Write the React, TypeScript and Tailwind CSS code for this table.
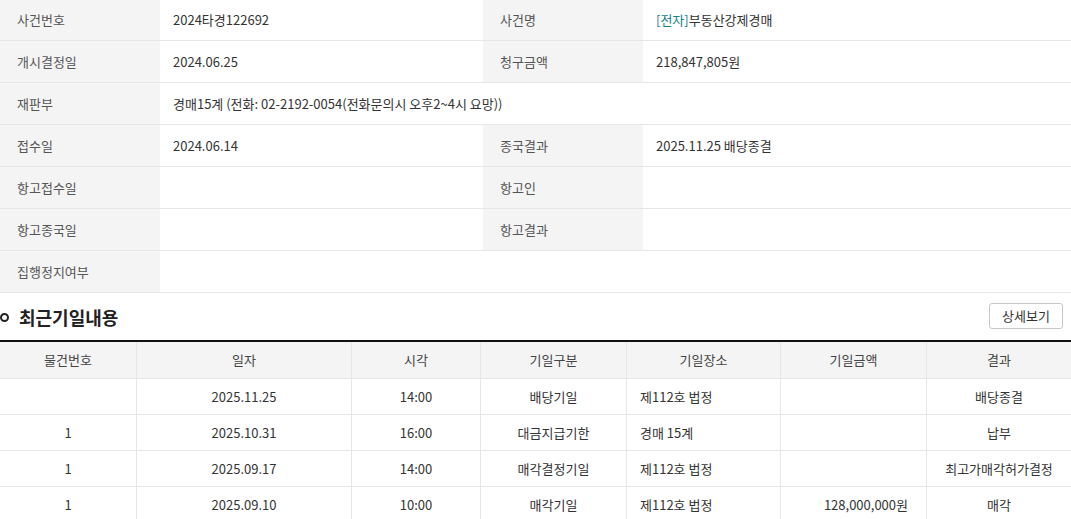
import React from "react";

const font = { fontFamily: '"Noto Sans CJK KR", "Noto Sans", sans-serif' };

type Row = { l1: string; v1: React.ReactNode; l2?: string; v2?: React.ReactNode; span?: boolean };

const rows: Row[] = [
  { l1: "사건번호", v1: "2024타경122692", l2: "사건명", v2: (<><span className="text-[#17808f]">[전자]</span>부동산강제경매</>) },
  { l1: "개시결정일", v1: "2024.06.25", l2: "청구금액", v2: "218,847,805원" },
  { l1: "재판부", v1: "경매15계 (전화: 02-2192-0054(전화문의시 오후2~4시 요망))", span: true },
  { l1: "접수일", v1: "2024.06.14", l2: "종국결과", v2: "2025.11.25 배당종결" },
  { l1: "항고접수일", v1: "", l2: "항고인", v2: "" },
  { l1: "항고종국일", v1: "", l2: "항고결과", v2: "" },
  { l1: "집행정지여부", v1: "", span: true },
];

const hist = [
  ["", "2025.11.25", "14:00", "배당기일", "제112호 법정", "", "배당종결"],
  ["1", "2025.10.31", "16:00", "대금지급기한", "경매 15계", "", "납부"],
  ["1", "2025.09.17", "14:00", "매각결정기일", "제112호 법정", "", "최고가매각허가결정"],
  ["1", "2025.09.10", "10:00", "매각기일", "제112호 법정", "128,000,000원", "매각"],
];

const widths = [137, 215, 129, 146, 154, 146, 144];
const heads = ["물건번호", "일자", "시각", "기일구분", "기일장소", "기일금액", "결과"];

export default function App() {
  return (
    <div className="w-[1071px] h-[519px] overflow-hidden bg-white text-[13px] text-[#333]" style={font}>
      <div className="flex flex-col">
        {rows.map((r, i) => (
          <div key={i} className={`flex border-b border-[#e6e6e6] ${i === 0 ? "h-[41px]" : "h-[42px]"}`}>
            <div className="w-[160px] bg-[#f4f4f4] flex items-center pl-[17px] text-[#555]">{r.l1}</div>
            {r.span ? (
              <div className="flex-1 flex items-center pl-[13px]">{r.v1}</div>
            ) : (
              <>
                <div className="w-[323px] flex items-center pl-[13px]">{r.v1}</div>
                <div className="w-[160px] bg-[#f4f4f4] flex items-center pl-[17px] text-[#555]">{r.l2}</div>
                <div className="flex-1 flex items-center pl-[13px]">{r.v2}</div>
              </>
            )}
          </div>
        ))}
      </div>

      <div className="h-[47px] flex items-center justify-between pr-[8px]">
        <div className="flex items-center gap-[10px] pt-[2px]">
          <span className="block w-[9px] h-[9px] rounded-full border-[2px] border-[#222]" />
          <span className="text-[18px] font-bold text-[#222]">최근기일내용</span>
        </div>
        <button className="w-[74px] h-[26px] border border-[#c8c8c8] rounded-[3px] bg-white text-[13px] text-[#333] mt-[-2px]">상세보기</button>
      </div>

      <div className="border-t-2 border-[#111]">
        <div className="flex h-[37px] bg-[#f4f4f4] border-b border-[#e6e6e6] text-[#444]">
          {heads.map((h, i) => (
            <div key={i} style={{ width: widths[i] }} className={`flex items-center justify-center ${i < 6 ? "border-r border-[#e6e6e6]" : "flex-1"}`}>{h}</div>
          ))}
        </div>
        {hist.map((r, ri) => (
          <div key={ri} className="flex h-[36px] border-b border-[#e6e6e6]">
            {r.map((c, i) => (
              <div
                key={i}
                style={{ width: widths[i] }}
                className={`flex items-center ${i < 6 ? "border-r border-[#e6e6e6]" : "flex-1"} ${i === 4 ? "justify-start pl-[13px]" : i === 5 ? "justify-end pr-[18px]" : "justify-center"}`}
              >
                {c}
              </div>
            ))}
          </div>
        ))}
      </div>
    </div>
  );
}
